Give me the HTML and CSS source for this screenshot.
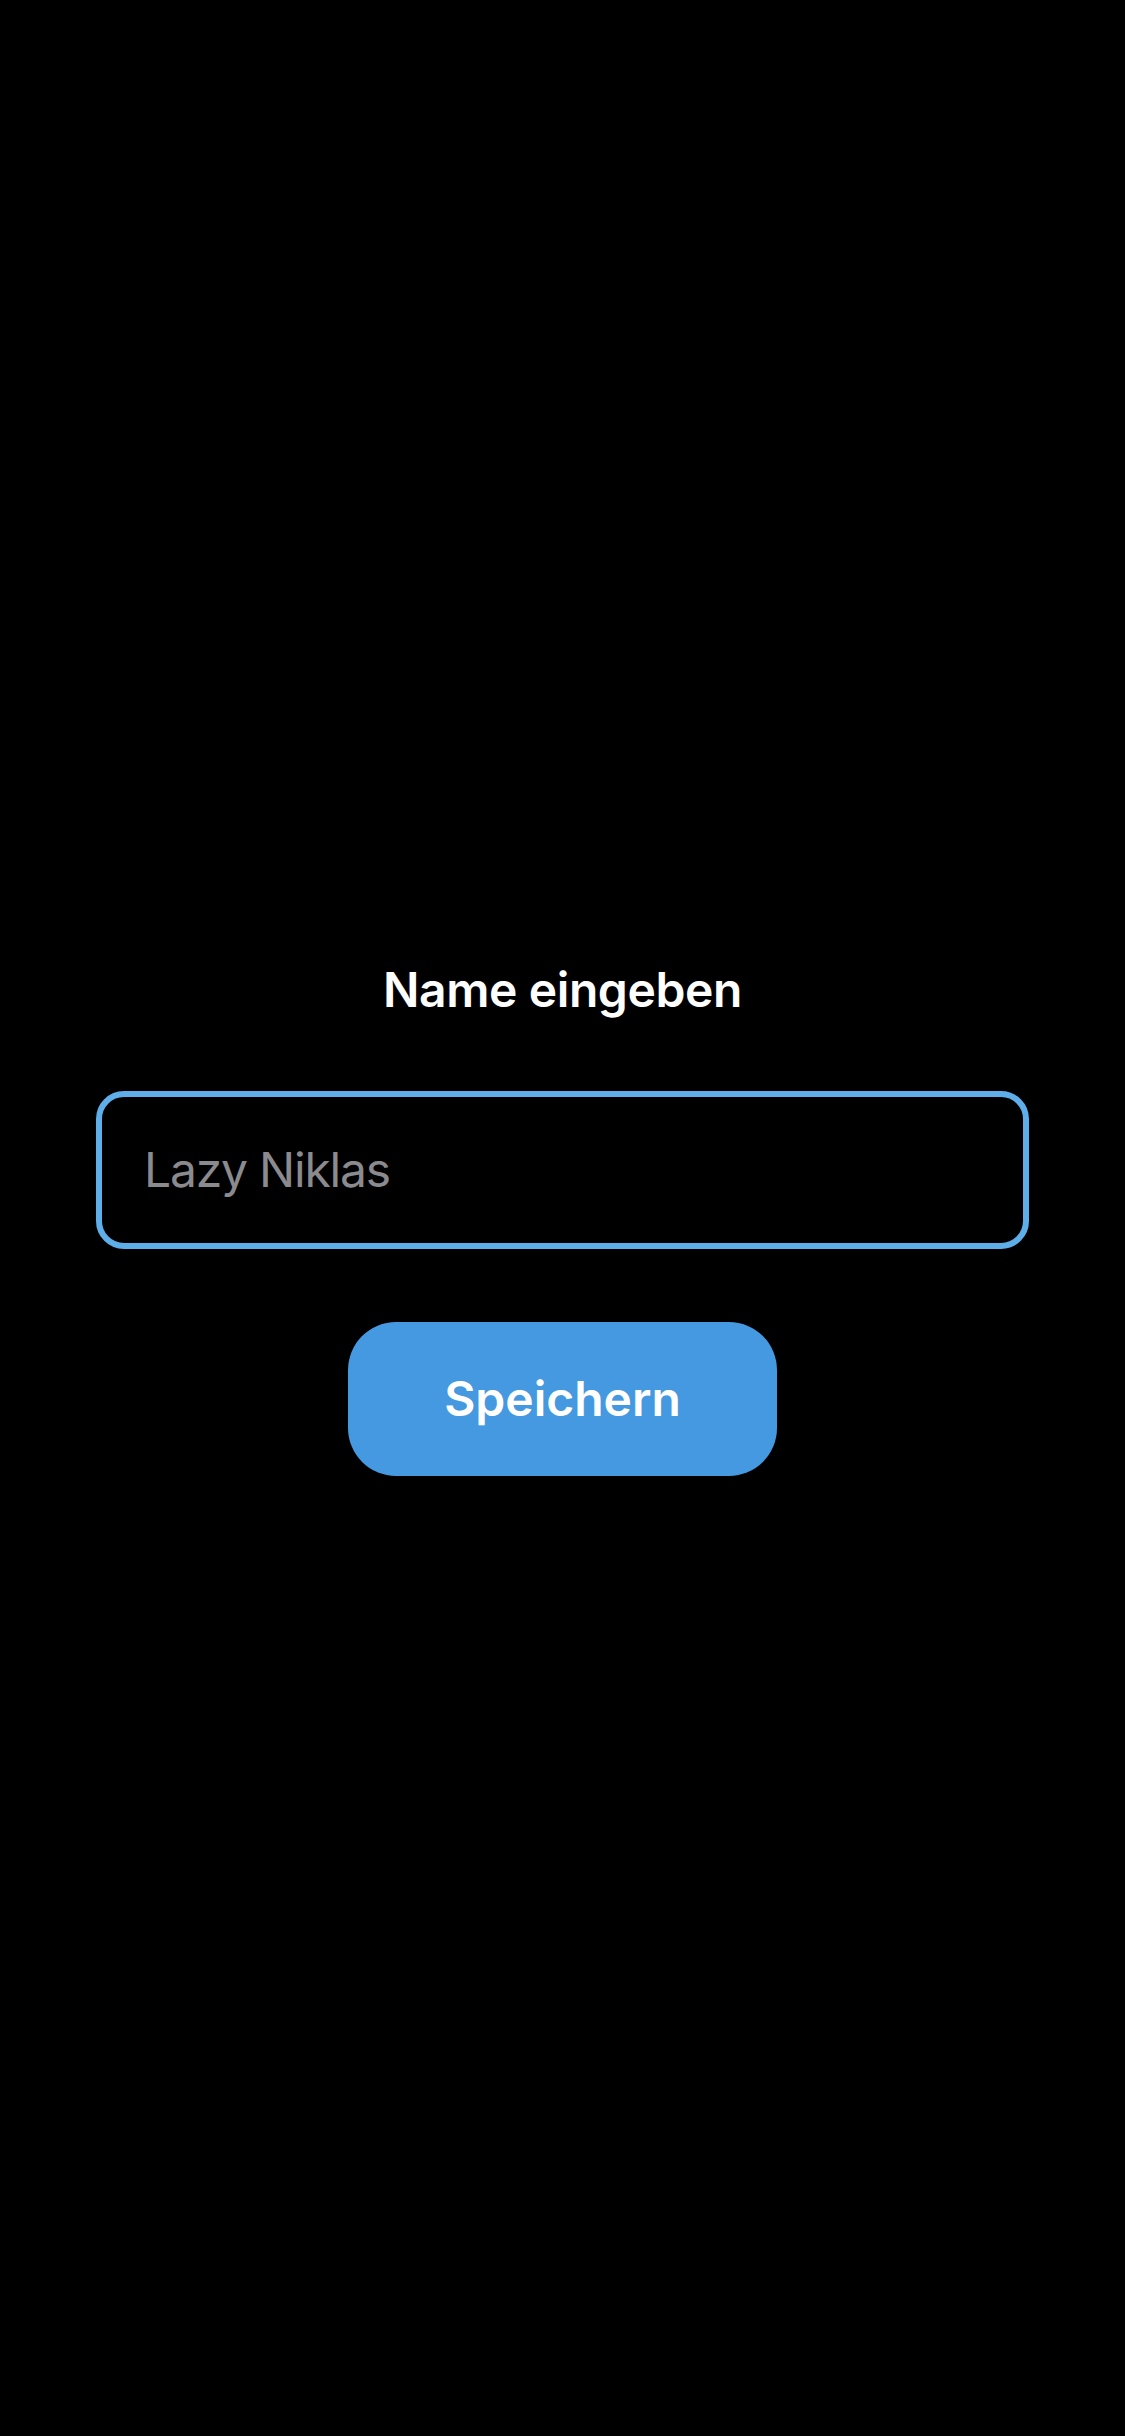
FILE: index.html
```html
<!DOCTYPE html>
<html lang="de">
<head>
<meta charset="utf-8">
<title>Name eingeben</title>
<link rel="stylesheet" href="styles.css">
</head>
<body>
<main class="screen">
  <h1 class="title">Name eingeben</h1>
  <input class="name-input" type="text" placeholder="Lazy Niklas">
  <button class="save-btn" type="button">Speichern</button>
</main>
</body>
</html>
```

FILE: styles.css
```css
* {
  box-sizing: border-box;
}

html, body {
  margin: 0;
  padding: 0;
  background: #000;
}

body {
  font-family: Inter, "Liberation Sans", sans-serif;
}

.screen {
  width: 1125px;
  height: 2436px;
  display: flex;
  flex-direction: column;
  align-items: center;
  justify-content: center;
}

.title {
  margin: 0;
  font-size: 48px;
  line-height: 58px;
  font-weight: 600;
  letter-spacing: -0.4px;
  color: #fff;
}

.name-input {
  margin-top: 72px;
  width: 933px;
  height: 158px;
  border: 6px solid #5eaeea;
  border-radius: 28px;
  background: #000;
  padding: 0 42px;
  font-family: Inter, "Liberation Sans", sans-serif;
  font-size: 48px;
  letter-spacing: -1.2px;
  color: #fff;
  outline: none;
}

.name-input::placeholder {
  color: #8a8a8f;
  opacity: 1;
}

.save-btn {
  margin-top: 73px;
  width: 429px;
  height: 154px;
  border: none;
  border-radius: 48px;
  background: #4499e0;
  color: #fff;
  font-family: Inter, "Liberation Sans", sans-serif;
  font-size: 48px;
  font-weight: 600;
  padding: 0;
}
```
